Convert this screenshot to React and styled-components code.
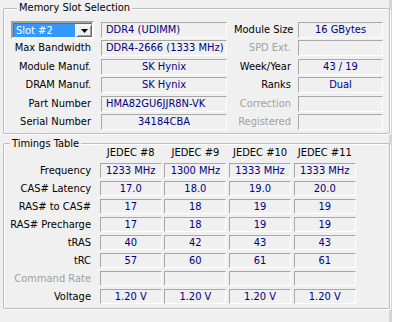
import React from "react";
import styled, { createGlobalStyle } from "styled-components";

const Global = createGlobalStyle`
  html, body { margin: 0; padding: 0; background: #f0f0f0; }
  body {
    font-family: Tahoma, "DejaVu Sans Condensed", "DejaVu Sans", sans-serif;
    font-size: 11px;
    color: #000;
  }
  * { box-sizing: border-box; }
`;

const Page = styled.div`
  width: 394px;
  height: 322px;
  padding: 4px 0 0 3px;
  display: flex;
  flex-direction: column;
  gap: 6px;
  border-right: 2px solid #fff;
  box-shadow: inset -3px 0 0 #d5d5d5;
`;

const Group = styled.fieldset`
  margin: 0;
  width: 387px;
  padding: ${(p) => p.$pad};
  border: 1px solid #bdbdbd;
  border-radius: 2px;
  box-shadow: inset 1px 1px 0 #fff, 1px 1px 0 #fff;
  min-inline-size: 0;
`;

const Legend = styled.legend`
  margin-left: 6px;
  padding: 0 2px;
  line-height: 8px;
  height: 8px;
  background: #f0f0f0;
`;

const SlotGrid = styled.div`
  display: grid;
  grid-template-columns: 83px 126px 57px 85px;
  grid-auto-rows: 16px;
  column-gap: 7px;
  row-gap: 2.4px;
`;

const Label = styled.div`
  text-align: right;
  line-height: 16px;
  white-space: nowrap;
  padding-right: ${(p) => p.$pr || "0"};
  color: ${(p) => (p.$disabled ? "#a0a0a0" : "#000")};
`;

const Value = styled.div`
  height: ${(p) => p.$h || "16px"};
  line-height: ${(p) => (p.$h ? `calc(${p.$h} - 2px)` : "14px")};
  border: 1px solid;
  border-color: #a7a7a7 #fff #fff #a7a7a7;
  color: #00007f;
  text-align: ${(p) => (p.$left ? "left" : "center")};
  padding: 0 ${(p) => (p.$left ? "4px" : "0")};
  white-space: nowrap;
  overflow: hidden;
`;

const Combo = styled.div`
  display: flex;
  height: 18px;
  margin-top: -1px;
  border: 2px solid;
  border-color: #a0a0a0 #fff #fff #a0a0a0;
  box-shadow: inset 1px 1px 0 #696969;
  background: #fff;
  padding: 1px 0 0 1px;
`;

const ComboText = styled.div`
  flex: 1;
  background: #3399ff;
  color: #fff;
  line-height: 14px;
  padding-left: 2px;
  margin: 0 1px 0 0;
`;

const ComboButton = styled.div`
  width: 16px;
  display: flex;
  align-items: center;
  justify-content: center;
  background: #f0f0f0;
  border: 1px solid;
  border-color: #f0f0f0 #696969 #696969 #f0f0f0;
  box-shadow: inset 1px 1px 0 #fff, inset -1px -1px 0 #a0a0a0;
`;

const TimingHeader = styled.div`
  display: grid;
  grid-template-columns: 93px repeat(4, 62px);
  column-gap: 2.7px;
  height: 10px;
  line-height: 10px;
  margin: 0 0 5px;
`;

const HeadCell = styled.div`
  text-align: center;
  white-space: nowrap;
`;

const TimingGrid = styled.div`
  display: grid;
  grid-template-columns: 93px repeat(4, 62px);
  grid-auto-rows: 15px;
  column-gap: 2.7px;
  row-gap: 3px;
`;

const TLabel = styled.div`
  text-align: right;
  padding-right: 6px;
  line-height: 15px;
  white-space: nowrap;
  color: ${(p) => (p.$disabled ? "#a0a0a0" : "#000")};
`;

const slotRows = [
  [null, { v: "DDR4 (UDIMM)", left: true }, "Module Size", { v: "16 GBytes" }],
  ["Max Bandwidth", { v: "DDR4-2666 (1333 MHz)", left: true }, { l: "SPD Ext.", d: true }, { v: "" }],
  ["Module Manuf.", { v: "SK Hynix" }, "Week/Year", { v: "43 / 19" }],
  ["DRAM Manuf.", { v: "SK Hynix" }, "Ranks", { v: "Dual" }],
  ["Part Number", { v: "HMA82GU6JJR8N-VK", left: true }, { l: "Correction", d: true }, { v: "" }],
  ["Serial Number", { v: "34184CBA" }, { l: "Registered", d: true }, { v: "" }],
];

const timings = [
  ["Frequency", ["1233 MHz", "1300 MHz", "1333 MHz", "1333 MHz"]],
  ["CAS# Latency", ["17.0", "18.0", "19.0", "20.0"]],
  ["RAS# to CAS#", ["17", "18", "19", "19"]],
  ["RAS# Precharge", ["17", "18", "19", "19"]],
  ["tRAS", ["40", "42", "43", "43"]],
  ["tRC", ["57", "60", "61", "61"]],
  ["Command Rate", ["", "", "", ""], true],
  ["Voltage", ["1.20 V", "1.20 V", "1.20 V", "1.20 V"]],
];

function Arrow() {
  return (
    <svg width="7" height="4" viewBox="0 0 7 4">
      <path d="M0 0h7L3.5 4z" fill="#000" />
    </svg>
  );
}

export default function App() {
  return (
    <>
      <Global />
      <Page>
        <Group $pad="10px 0 3px 7px">
          <Legend>Memory Slot Selection</Legend>
          <SlotGrid>
            {slotRows.map((r, i) => (
              <React.Fragment key={i}>
                {r[0] === null ? (
                  <Combo>
                    <ComboText>Slot #2</ComboText>
                    <ComboButton>
                      <Arrow />
                    </ComboButton>
                  </Combo>
                ) : (
                  <Label $pr="3px">{r[0]}</Label>
                )}
                <Value $left={r[1].left}>{r[1].v}</Value>
                {typeof r[2] === "string" ? (
                  <Label>{r[2]}</Label>
                ) : (
                  <Label $disabled={r[2].d}>{r[2].l}</Label>
                )}
                <Value>{r[3].v}</Value>
              </React.Fragment>
            ))}
          </SlotGrid>
        </Group>
        <Group $pad="0 0 4px 0">
          <Legend>Timings Table</Legend>
          <TimingHeader>
            <div />
            <HeadCell>JEDEC #8</HeadCell>
            <HeadCell>JEDEC #9</HeadCell>
            <HeadCell>JEDEC #10</HeadCell>
            <HeadCell>JEDEC #11</HeadCell>
          </TimingHeader>
          <TimingGrid>
            {timings.map(([label, vals, dis]) => (
              <React.Fragment key={label}>
                <TLabel $disabled={dis}>{label}</TLabel>
                {vals.map((v, j) => (
                  <Value key={j} $h="15px">
                    {v}
                  </Value>
                ))}
              </React.Fragment>
            ))}
          </TimingGrid>
        </Group>
      </Page>
    </>
  );
}
